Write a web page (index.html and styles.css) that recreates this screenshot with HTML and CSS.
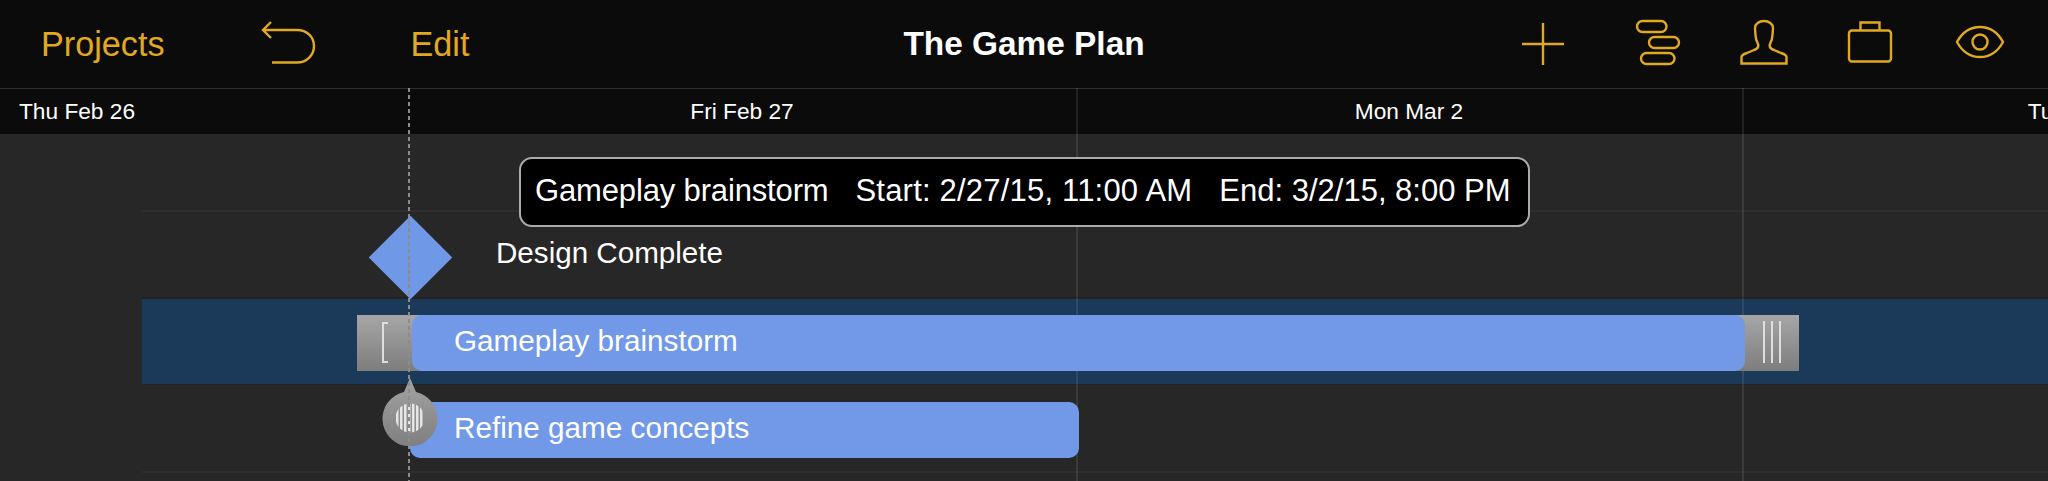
FILE: index.html
```html
<!DOCTYPE html>
<html lang="en">
<head>
<meta charset="utf-8">
<title>The Game Plan</title>
<link rel="stylesheet" href="styles.css">
</head>
<body>
<div class="app">
  <header class="toolbar">
    <nav class="tools tools-left">
      <span class="tool-text">Projects</span>
      <svg class="icon icon-back" width="54" height="48" viewBox="0 0 54 48"><path d="M10 2 L2 10 L10 18 M2 10 H36 C46 10 53 17 53 26 C53 35 46 42.500 36 42.500 H11"/></svg>
      <span class="tool-text">Edit</span>
    </nav>
    <h1 class="title">The Game Plan</h1>
    <nav class="tools tools-right">
      <svg class="icon icon-plus" width="42" height="48" viewBox="0 0 42 48"><path d="M21 3 V45 M0 24 H42"/></svg>
      <svg class="icon" width="44" height="48" viewBox="0 0 44 48"><rect x="1" y="1" width="29.500" height="11" rx="5.500"/><rect x="13" y="17" width="30" height="11" rx="5.500"/><rect x="5" y="33" width="33.500" height="11" rx="5.500"/></svg>
      <svg class="icon" width="48" height="48" viewBox="0 0 48 48"><path d="M1.500 43.500 V37 C1.500 35 4 34 7 33 L14 30 C17 29 19 27 18 24 C16 20 15.500 18 15.500 15 L15 8 C15 4 19 1 24 1 C29 1 33 4 33 8 L32.500 15 C32.500 18 32 20 30 24 C29 27 31 29 34 30 L41 33 C44 34 46.500 35 46.500 37 V43.500 Z"/></svg>
      <svg class="icon" width="44" height="48" viewBox="0 0 44 48"><rect x="1" y="10.500" width="42" height="31" rx="3"/><path d="M12.500 10.500 V2.500 H31.500 V10.500"/></svg>
      <svg class="icon icon-eye" width="48" height="48" viewBox="0 0 48 48"><path d="M1 22 C7 11 15 7 24 7 C33 7 41 11 47 22 C41 33 33 37 24 37 C15 37 7 33 1 22 Z"/><circle cx="24" cy="22" r="7.500"/></svg>
    </nav>
  </header>

  <div class="dates">
    <div class="date date-first">Thu Feb 26</div>
    <div class="date">Fri Feb 27</div>
    <div class="date">Mon Mar 2</div>
    <div class="date date-last">Tue Mar 3</div>
  </div>

  <main class="chart">
    <div class="row row-tooltip"></div>
    <div class="row row-plain"></div>
    <div class="row row-selected"></div>
    <div class="row"></div>

    <i class="gridline gridline-a"></i>
    <i class="gridline gridline-b"></i>

    <div class="milestone"></div>
    <span class="milestone-label">Design Complete</span>

    <div class="handle handle-left"><i class="bracket"></i></div>
    <div class="handle handle-right"><i></i><i></i><i></i></div>
    <div class="bar bar-main">Gameplay brainstorm</div>
    <div class="bar bar-sub">Refine game concepts</div>

    <svg class="dep-knob" width="56" height="68" viewBox="0 0 56 68">
      <defs>
        <linearGradient id="knob" x1="0" y1="0" x2="0" y2="1"><stop offset="0" stop-color="#a3a3a3"/><stop offset="1" stop-color="#7f7f7f"/></linearGradient>
        <clipPath id="stripes"><circle cx="28" cy="40" r="14.500"/></clipPath>
      </defs>
      <path class="knob-body" d="M28 0 L34 14 A27.500 27.500 0 1 1 22 14 Z" fill="url(#knob)"/>
      <g clip-path="url(#stripes)" class="knob-stripes">
        <rect x="14" y="24" width="2.500" height="32"/><rect x="18" y="24" width="2.500" height="32"/><rect x="22" y="24" width="2.500" height="32"/><rect x="26" y="24" width="2.500" height="32"/><rect x="30" y="24" width="2.500" height="32"/><rect x="34" y="24" width="2.500" height="32"/><rect x="38" y="24" width="2.500" height="32"/>
      </g>
    </svg>

    <i class="guide"></i>

    <div class="tooltip"><span class="tip-name">Gameplay brainstorm</span><span class="tip-start">Start: 2/27/15, 11:00 AM</span><span>End: 3/2/15, 8:00 PM</span></div>
  </main>
</div>
</body>
</html>
```
FILE: styles.css
```css
* { box-sizing: border-box; }
html, body { margin: 0; padding: 0; background: #272727; }
body { font-family: "Liberation Sans", Arial, sans-serif; color: #fff; }
.app { width: 2048px; height: 481px; overflow: hidden; position: relative; }

.toolbar {
  height: 89px;
  background: #0b0b0b;
  border-bottom: 1px solid #2f2f2f;
  display: grid;
  grid-template-columns: 1fr auto 1fr;
  align-items: center;
}
.tools { display: flex; align-items: center; }
.tools-left { padding-left: 41px; gap: 96px; }
.tools-right { justify-content: flex-end; padding-right: 44px; gap: 60px; }
.tool-text { color: #e0a921; font-size: 34.200px; line-height: 42px; }
.title { margin: 0; font-size: 33.400px; font-weight: 700; line-height: 40px; }
.icon { display: block; fill: none; stroke: #e0a921; stroke-width: 2.400; overflow: visible; }
.icon-plus { margin-right: 12px; }
.icon-eye { margin-left: 4px; }

.dates {
  height: 45px;
  background: #0b0b0b;
  display: grid;
  grid-template-columns: 408px 668px 666px 306px;
  overflow: hidden;
}
.date {
  font-size: 22.700px;
  line-height: 44px;
  text-align: center;
  white-space: nowrap;
}
.date-last { width: 674px; }
.date-first { text-align: left; padding-left: 19px; }

.chart { position: relative; height: 347px; background: #272727; }
.row { height: 88px; margin-left: 142px; border-bottom: 2px solid #2e2e2e; }
.row-tooltip { height: 78px; }
.row-plain { height: 87px; border-bottom-color: #222; }
.row-selected {
  height: 86px;
  background: #1b3a5a;
  border-bottom: 1px solid #222;
}

.gridline { position: absolute; top: -46px; bottom: 0; width: 2px; background: rgba(255, 255, 255, 0.09); }
.gridline-a { left: 1076px; }
.gridline-b { left: 1742px; }

.guide {
  position: absolute;
  left: 408px;
  top: -46px;
  bottom: 0;
  width: 2px;
  background: repeating-linear-gradient(to bottom, #8c8c8c 0 4px, transparent 4px 7px);
}

.milestone {
  position: absolute;
  left: 381px;
  top: 94px;
  width: 59px;
  height: 59px;
  background: #6f98e6;
  transform: rotate(45deg);
}
.milestone-label { position: absolute; left: 496px; top: 100px; font-size: 29.600px; line-height: 38px; white-space: nowrap; }

.bar {
  position: absolute;
  height: 56px;
  background: #7199e8;
  border-radius: 10px;
  color: #fff;
  font-size: 29.700px;
  line-height: 52px;
  white-space: nowrap;
}
.bar-main { left: 412px; width: 1333px; top: 181px; padding-left: 42px; }
.bar-sub { left: 410px; width: 669px; top: 268px; padding-left: 44px; }

.handle {
  position: absolute;
  top: 181px;
  height: 56px;
  background: linear-gradient(to bottom, #a6a6a6, #7d7d7d);
}
.handle-left { left: 357px; width: 80px; }
.handle-right { left: 1700px; width: 99px; display: flex; gap: 6px; padding: 6px 0 8px 63px; }
.handle-right i { display: block; width: 2px; height: 42px; background: #dedede; }
.bracket {
  position: absolute;
  left: 25px;
  top: 7px;
  width: 6px;
  height: 41px;
  border: 2px solid #dedede;
  border-right: 0;
}

.dep-knob { position: absolute; left: 382px; top: 244px; }
.knob-stripes { fill: #e6e6e6; }

.tooltip {
  position: absolute;
  left: 519px;
  top: 23px;
  width: 1011px;
  height: 70px;
  background: #000;
  border: 2px solid #ababab;
  border-radius: 13px;
  display: flex;
  align-items: center;
  gap: 27px;
  padding: 0 0 2px 14px;
  font-size: 31px;
  white-space: nowrap;
}
.tip-name { letter-spacing: -0.150px; }
.tip-start { letter-spacing: 0.200px; }
```
